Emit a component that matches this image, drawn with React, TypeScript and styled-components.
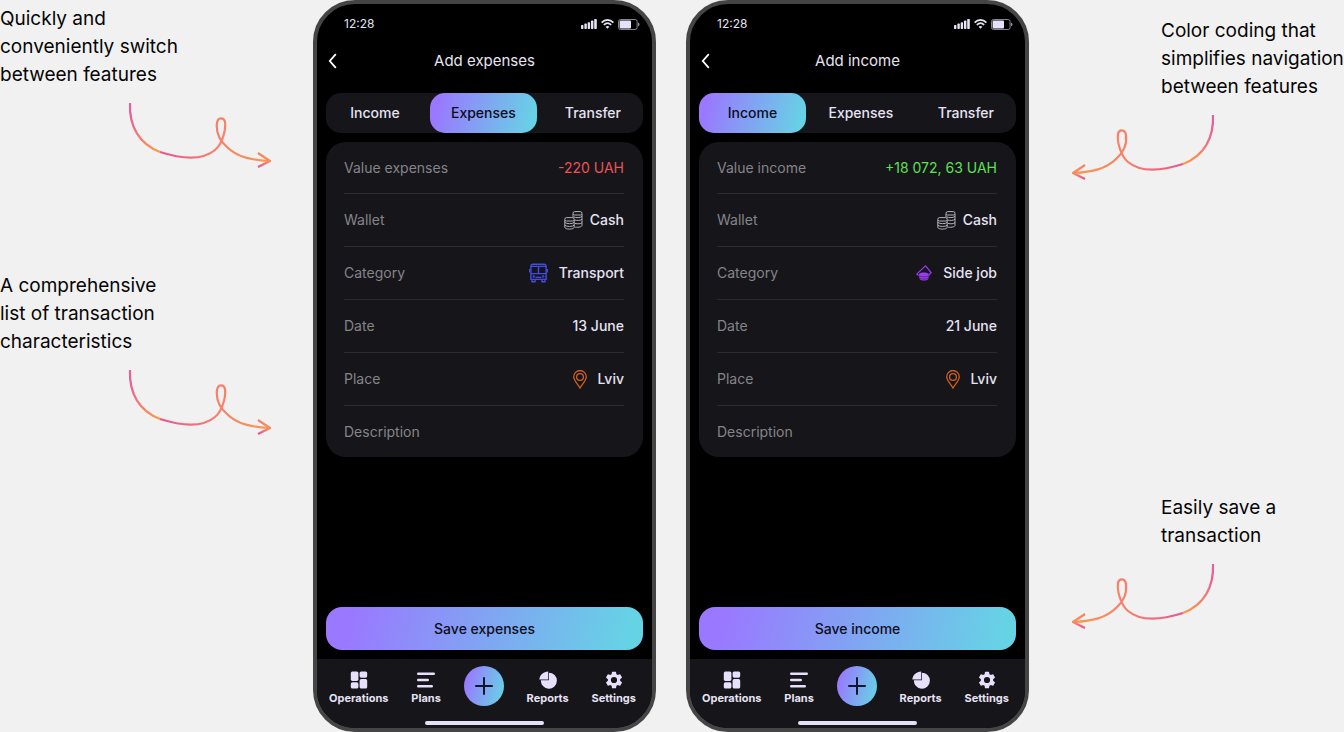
import React from "react";
import styled, { createGlobalStyle } from "styled-components";

const brand = "linear-gradient(105deg, #9a78ff 8%, #66d3e5 95%)";

const GlobalStyle = createGlobalStyle`
  * { box-sizing: border-box; }
  body { margin: 0; background: #f1f1f1; font-family: Inter, "Liberation Sans", sans-serif; }
  button { font: inherit; border: 0; padding: 0; margin: 0; background: none; color: inherit; cursor: pointer; }
  a { color: inherit; text-decoration: none; }
  svg { display: block; flex: none; }
`;

const Page = styled.main`
  display: flex;
  justify-content: center;
  min-height: 100vh;
  padding-right: 2px;
`;

const Side = styled.aside<{ $top: number; $gap: number }>`
  flex: 1 1 0;
  min-width: 0;
  display: flex;
  flex-direction: column;
  gap: ${(p) => p.$gap}px;
  padding-top: ${(p) => p.$top}px;
`;

const Note = styled.section<{ $right?: boolean }>`
  display: flex;
  flex-direction: column;
  gap: 13px;
  padding-left: ${(p) => (p.$right ? 43 : 0)}px;

  p { margin: 0 0 0 ${(p) => (p.$right ? 89 : 0)}px; }
  svg { margin-left: ${(p) => (p.$right ? 0 : 128)}px; transform: ${(p) => (p.$right ? "scaleX(-1)" : "none")}; }
`;

const NoteText = styled.p`
  font-size: 19px;
  line-height: 28px;
  white-space: pre;
  color: #050505;
`;

const Phones = styled.div`
  display: flex;
  gap: 30px;
`;

const Phone = styled.article`
  width: 343px;
  display: flex;
  flex-direction: column;
  border: 4px solid #454545;
  border-radius: 42px;
  background: #000;
  color: #e6e3f3;
  overflow: hidden;
`;

const StatusBar = styled.div`
  display: flex;
  justify-content: space-between;
  align-items: center;
  padding: 12px 12px 0 27px;
  font-size: 12px;
  line-height: 16px;
`;

const StatusIcons = styled.div`
  display: flex;
  align-items: center;
  gap: 4px;
`;

const Header = styled.header`
  display: grid;
  grid-template-columns: 24px 1fr 24px;
  align-items: center;
  padding: 17px 3px 0;
`;

const BackButton = styled.button`
  height: 24px;
  display: grid;
  place-items: center;
`;

const Title = styled.h1`
  margin: 0;
  font-size: 15px;
  line-height: 24px;
  font-weight: 400;
  text-align: center;
`;

const Content = styled.div`
  flex: 1;
  display: flex;
  flex-direction: column;
  padding: 20px 9px 9px;
`;

const Tabs = styled.nav`
  display: flex;
  justify-content: space-between;
  height: 40px;
  border-radius: 15px;
  background: #16151a;
`;

const Tab = styled.button<{ $active: boolean }>`
  padding: 0 ${(p) => (p.$active ? 0 : 22)}px 2px;
  min-width: 98px;
  width: ${(p) => (p.$active ? "107px" : "auto")};
  border-radius: 15px;
  font-size: 14px;
  font-weight: 500;
  background: ${(p) => (p.$active ? brand : "none")};
  color: ${(p) => (p.$active ? "#0d0c1c" : "inherit")};
`;

const Card = styled.dl`
  margin: 9px 0 0;
  padding: 0 19px 0 18px;
  border-radius: 20px;
  background: #16151a;
`;

const Row = styled.div`
  display: flex;
  justify-content: space-between;
  align-items: center;
  height: 53px;
  border-bottom: 1px solid #2c2b30;
  font-size: 14px;
  line-height: 20px;

  &:first-child { height: 52px; }
  &:last-child { height: 51px; border-bottom: 0; }
`;

const Label = styled.dt`
  color: #858489;
`;

const Value = styled.dd<{ $color?: string; $gap?: number }>`
  display: flex;
  align-items: center;
  gap: ${(p) => p.$gap ?? 0}px;
  margin: 0;
  font-weight: ${(p) => (p.$color ? 400 : 500)};
  color: ${(p) => p.$color ?? "inherit"};
`;

const SaveButton = styled.button`
  height: 43px;
  margin-top: auto;
  border-radius: 16px;
  background: ${brand};
  color: #0d0c1c;
  font-size: 14px;
  font-weight: 500;
`;

const BottomBar = styled.footer`
  display: flex;
  flex-direction: column;
  align-items: center;
  background: #16151a;
  padding-bottom: 3px;
`;

const NavRow = styled.nav`
  align-self: stretch;
  display: flex;
  justify-content: space-between;
  align-items: flex-start;
  padding: 7px 16px 0 12px;
`;

const NavItem = styled.a`
  display: flex;
  flex-direction: column;
  align-items: center;
  gap: 1px;
  padding-top: 5px;
  font-size: 11px;
  line-height: 16px;
  font-weight: 700;
`;

const AddButton = styled.button`
  width: 40px;
  height: 40px;
  border-radius: 50%;
  display: grid;
  place-items: center;
  background: ${brand};
`;

const HomeIndicator = styled.div`
  width: 119px;
  height: 4px;
  margin-top: 15px;
  border-radius: 2px;
  background: #e4e0f8;
`;

const Arrow = ({ id }: { id: string }) => (
  <svg width="143" height="66" viewBox="0 0 143 66" fill="none" strokeWidth="2.2" aria-hidden="true">
    <defs>
      <linearGradient id={id + "a"} gradientUnits="userSpaceOnUse" x1="8" y1="14" x2="24" y2="52">
        <stop stopColor="#e8609a" /><stop offset="1" stopColor="#fb9a4c" />
      </linearGradient>
      <linearGradient id={id + "b"} gradientUnits="userSpaceOnUse" x1="32" y1="50" x2="142" y2="58">
        <stop stopColor="#e8578f" /><stop offset="0.5" stopColor="#f77f6c" /><stop offset="1" stopColor="#fb9a4c" />
      </linearGradient>
      <linearGradient id={id + "c"} gradientUnits="userSpaceOnUse" x1="130" y1="64" x2="138" y2="56">
        <stop stopColor="#e8578f" /><stop offset="1" stopColor="#fb8a5c" />
      </linearGradient>
    </defs>
    <path d="M2 1C1 24 11 42 32 50" stroke={`url(#${id}a)`} />
    <path d="M32 50C54 57 74 59 87 48C95 41 98 27 97 20C96 15 90 15 89 21C88 29 91 38 99 45C109 55 123 58 141 59" stroke={`url(#${id}b)`} />
    <path d="M130 51L142 59L130 65" stroke={`url(#${id}c)`} />
  </svg>
);

const Signal = () => (
  <svg width="16" height="10" viewBox="0 0 16 10" fill="#e6e3f3" aria-hidden="true">
    <rect y="6" width="2.4" height="4" rx=".7" />
    <rect x="3.4" y="4.5" width="2.4" height="5.5" rx=".7" />
    <rect x="6.7" y="3.2" width="2.4" height="6.8" rx=".7" />
    <rect x="10" y="1.5" width="2.4" height="8.5" rx=".7" />
    <rect x="13.2" width="2.6" height="10" rx=".7" />
  </svg>
);

const Wifi = () => (
  <svg width="13" height="10" viewBox="0 0 13 10" fill="none" stroke="#e6e3f3" strokeWidth="1.6" aria-hidden="true">
    <path d="M.6 3.6C4-.1 9-.1 12.4 3.6M2.8 5.9c2.3-2.2 5.1-2.2 7.4 0" />
    <path d="M6.5 9.8 4.6 7.7c1.2-1 2.6-1 3.8 0z" fill="#e6e3f3" stroke="none" />
  </svg>
);

const Battery = () => (
  <svg width="22" height="11" viewBox="0 0 22 11" fill="none" aria-hidden="true">
    <rect x=".5" y=".5" width="18.6" height="10" rx="2" stroke="#86848f" />
    <rect x="1.6" y="1.6" width="11.4" height="7.8" rx="1" fill="#e6e0fb" />
    <path d="M20.2 3.6c1.7.6 1.7 3.2 0 3.8z" fill="#b5b2bf" />
  </svg>
);

const Coins = () => (
  <svg width="19" height="19" viewBox="0 0 19 19" fill="none" stroke="#b3b1ba" aria-hidden="true">
    <rect x="9" y=".6" width="9" height="3.4" rx="1.7" />
    <path d="M9 3v3.500M18 3v11.500c0 1.200-3 2-6.800 1.700M9.500 5.800c2.500 1.300 7 1.100 8.500-.5M10.500 9c2.500.8 6.300.6 7.500-.8M11 12.400c2.500.7 6 .5 7-.8" />
    <rect x=".8" y="6.600" width="9.400" height="3.400" rx="1.700" />
    <path d="M.8 9v7.300c0 2.400 9.400 2.400 9.400 0V9M.8 11.400c1.800 1.700 7.600 1.700 9.400 0M.8 14.200c1.800 1.700 7.600 1.700 9.400 0" />
  </svg>
);

const Bus = () => (
  <svg width="19" height="20" viewBox="0 0 19 20" fill="none" stroke="#434be0" strokeWidth="1.400" aria-hidden="true">
    <path d="M4 1.200h11c1.300 0 2.100.8 2.100 2v13.200H1.900V3.200c0-1.200.8-2 2.100-2z" />
    <path d="M1.900 3.400h15.200M1.900 10.600h15.200M9.500 3.400v7.200M.7 6v3.500M18.300 6v3.500" />
    <path d="M6.500 14.400h6" />
    <path d="M3 16.500v2.300h3v-2.300M13 16.500v2.300h3v-2.300" />
    <circle cx="4.800" cy="13.500" r=".5" /><circle cx="14.200" cy="13.500" r=".5" />
  </svg>
);

const SideJob = () => (
  <svg width="16" height="16" viewBox="0 0 16 16" fill="none" stroke="#9a3cf2" aria-hidden="true">
    <path d="M2.600 10.600.9 8.900 9.500.9l5.600 6.600-2.300 2.800" strokeWidth="1.200" />
    <path d="M2.800 9.200C4 7 11.500 7 12.900 9.200l-.6 4.800c-1.500 2-7 2-8.700 0z" fill="#9a3cf2" stroke="none" />
    <path d="M3.300 10.800c2 1.400 7.200 1.400 9.300 0M3.700 13.200c2 1.300 6.500 1.300 8.700 0" stroke="#33194e" strokeWidth=".6" />
  </svg>
);

const Pin = () => (
  <svg width="14" height="19" viewBox="0 0 14 19" fill="none" stroke="#d2601b" strokeWidth="1.300" aria-hidden="true">
    <path d="M7 18C5.400 14.500.7 11 .7 6.800a6.300 6.300 0 0 1 12.600 0C13.300 11 8.600 14.500 7 18z" />
    <circle cx="7" cy="7" r="3.400" />
  </svg>
);

const OperationsIcon = () => (
  <svg width="18" height="18" viewBox="0 0 18 18" fill="#e6e0fb" aria-hidden="true">
    <rect x=".8" y=".5" width="7.600" height="9.400" rx="1.600" />
    <rect x="9.600" y=".5" width="7.600" height="6.200" rx="1.600" />
    <rect x=".8" y="11.300" width="7.600" height="6.200" rx="1.600" />
    <rect x="9.600" y="8.100" width="7.600" height="9.400" rx="1.600" />
  </svg>
);

const PlansIcon = () => (
  <svg width="18" height="18" viewBox="0 0 18 18" stroke="#e6e0fb" strokeWidth="2.400" strokeLinecap="round" aria-hidden="true">
    <path d="M1.200 2.800h15.600M1.200 9h9.600M1.200 15.200h13.600" />
  </svg>
);

const ReportsIcon = () => (
  <svg width="18" height="18" viewBox="0 0 18 18" fill="#e6e0fb" aria-hidden="true">
    <path d="M9.200.4v8.200H.4C.4 4 4.400.4 9.200.4z" />
    <path d="M9.900 1.700a8 8 0 1 1-8 7.600h8z" />
  </svg>
);

const SettingsIcon = () => (
  <svg width="18" height="18" viewBox="1.500 1.500 21 21" fill="#e6e0fb" aria-hidden="true">
    <path d="M19.140 12.940c.04-.3.06-.61.06-.94s-.02-.64-.07-.94l2.030-1.580a.49.49 0 0 0 .12-.61l-1.920-3.320a.49.49 0 0 0-.59-.22l-2.390.96a7 7 0 0 0-1.620-.94l-.36-2.540A.48.48 0 0 0 13.920 2.400h-3.840a.48.48 0 0 0-.47.410l-.36 2.540c-.59.24-1.130.57-1.620.94l-2.390-.96a.48.48 0 0 0-.59.22L2.740 8.870a.48.48 0 0 0 .12.610l2.030 1.580a6 6 0 0 0 0 1.880l-2.030 1.580a.49.49 0 0 0-.12.610l1.920 3.320c.12.220.37.290.59.220l2.390-.96c.5.380 1.030.7 1.620.94l.36 2.540c.05.240.24.410.48.410h3.840c.24 0 .44-.17.47-.41l.36-2.540a7 7 0 0 0 1.620-.94l2.390.96c.22.080.47 0 .59-.22l1.920-3.320a.48.48 0 0 0-.12-.61zM12 15.600a3.600 3.600 0 1 1 0-7.200 3.600 3.600 0 0 1 0 7.200z" />
  </svg>
);

type Field = { label: string; value?: string; icon?: React.ReactNode; gap?: number; color?: string };

const AppScreen = ({ title, tab, save, fields }: { title: string; tab: string; save: string; fields: Field[] }) => (
  <Phone>
    <StatusBar>
      <span>12:28</span>
      <StatusIcons><Signal /><Wifi /><Battery /></StatusIcons>
    </StatusBar>
    <Header>
      <BackButton aria-label="Back">
        <svg width="9" height="16" viewBox="0 0 9 16" fill="none" stroke="#fff" strokeWidth="1.800" aria-hidden="true">
          <path d="M7.800 1.200 1.800 8l6 6.800" />
        </svg>
      </BackButton>
      <Title>{title}</Title>
    </Header>
    <Content>
      <Tabs>
        {["Income", "Expenses", "Transfer"].map((name) => (
          <Tab key={name} $active={name === tab}>{name}</Tab>
        ))}
      </Tabs>
      <Card>
        {fields.map((f) => (
          <Row key={f.label}>
            <Label>{f.label}</Label>
            <Value $color={f.color} $gap={f.gap}>{f.icon}{f.value}</Value>
          </Row>
        ))}
      </Card>
      <SaveButton>{save}</SaveButton>
    </Content>
    <BottomBar>
      <NavRow>
        <NavItem href="#operations"><OperationsIcon />Operations</NavItem>
        <NavItem href="#plans"><PlansIcon />Plans</NavItem>
        <AddButton aria-label="Add">
          <svg width="18" height="18" viewBox="0 0 18 18" stroke="#15142a" strokeWidth="2" strokeLinecap="round" aria-hidden="true">
            <path d="M9 1v16M1 9h16" />
          </svg>
        </AddButton>
        <NavItem href="#reports"><ReportsIcon />Reports</NavItem>
        <NavItem href="#settings"><SettingsIcon />Settings</NavItem>
      </NavRow>
      <HomeIndicator />
    </BottomBar>
  </Phone>
);

const expenses: Field[] = [
  { label: "Value expenses", value: "-220 UAH", color: "#ec5257" },
  { label: "Wallet", value: "Cash", icon: <Coins />, gap: 7 },
  { label: "Category", value: "Transport", icon: <Bus />, gap: 11 },
  { label: "Date", value: "13 June" },
  { label: "Place", value: "Lviv", icon: <Pin />, gap: 10 },
  { label: "Description" },
];

const income: Field[] = [
  { label: "Value income", value: "+18 072, 63 UAH", color: "#5de052" },
  { label: "Wallet", value: "Cash", icon: <Coins />, gap: 7 },
  { label: "Category", value: "Side job", icon: <SideJob />, gap: 11 },
  { label: "Date", value: "21 June" },
  { label: "Place", value: "Lviv", icon: <Pin />, gap: 10 },
  { label: "Description" },
];

export default function App() {
  return (
    <>
      <GlobalStyle />
      <Page>
        <Side $top={5} $gap={104}>
          <Note>
            <NoteText>{"Quickly and\nconveniently switch\nbetween features"}</NoteText>
            <Arrow id="switch" />
          </Note>
          <Note>
            <NoteText>{"A comprehensive\nlist of transaction\ncharacteristics"}</NoteText>
            <Arrow id="list" />
          </Note>
        </Side>
        <Phones>
          <AppScreen title="Add expenses" tab="Expenses" save="Save expenses" fields={expenses} />
          <AppScreen title="Add income" tab="Income" save="Save income" fields={income} />
        </Phones>
        <Side $top={17} $gap={314}>
          <Note $right>
            <NoteText>{"Color coding that\nsimplifies navigation\nbetween features"}</NoteText>
            <Arrow id="color" />
          </Note>
          <Note $right>
            <NoteText>{"Easily save a\ntransaction"}</NoteText>
            <Arrow id="save" />
          </Note>
        </Side>
      </Page>
    </>
  );
}
